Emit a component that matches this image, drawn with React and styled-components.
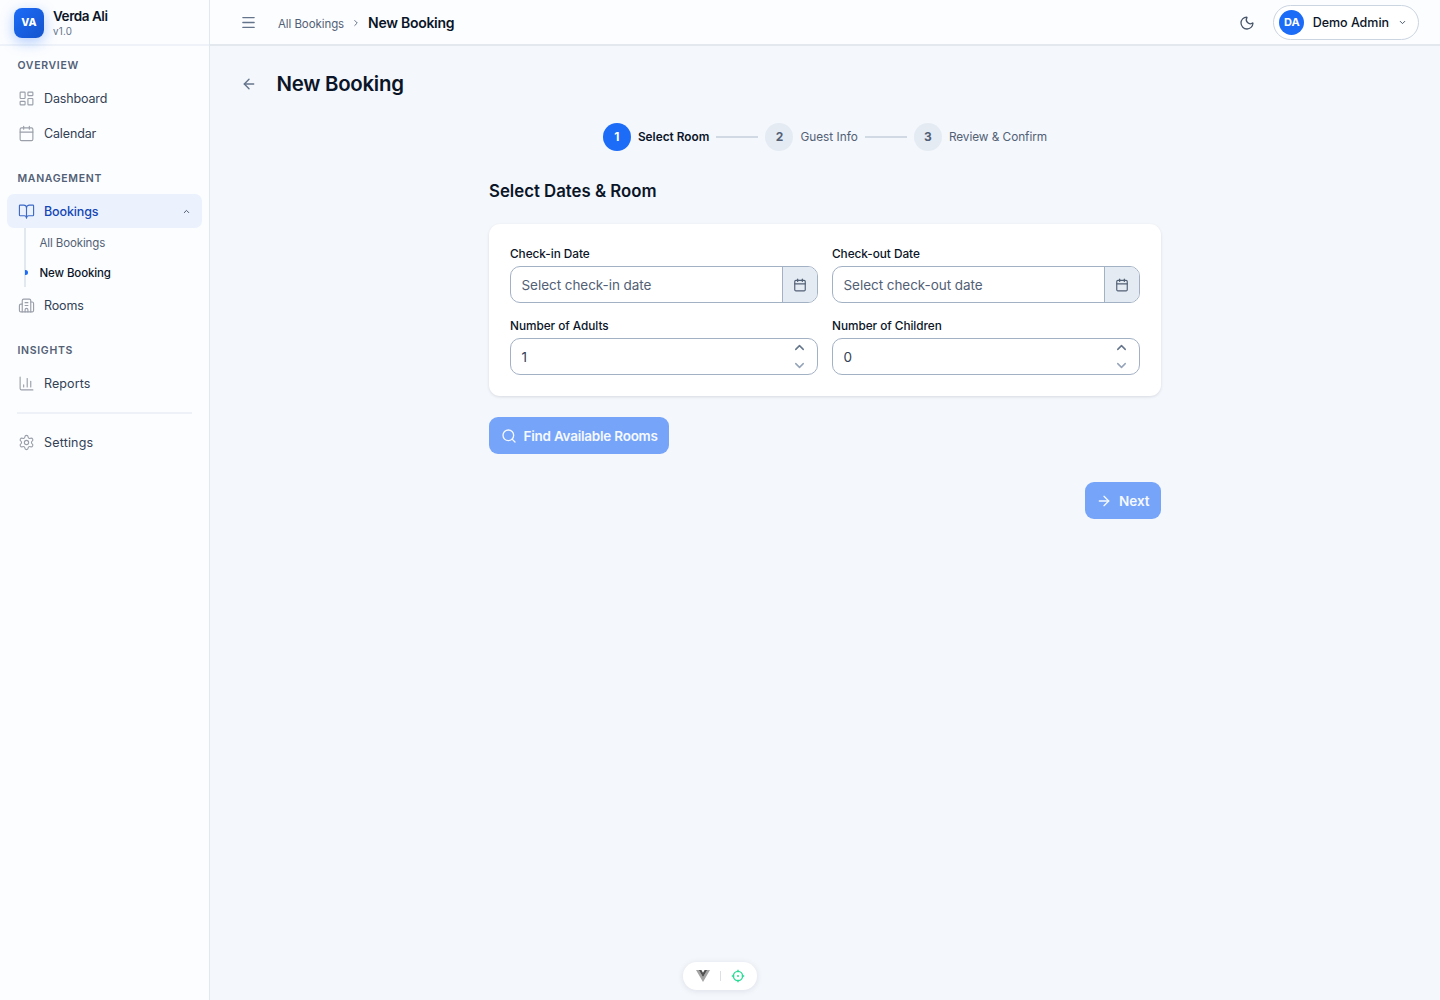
import styled, { createGlobalStyle } from "styled-components"
import {
  ArrowLeft,
  ArrowRight,
  BookOpen,
  Building2,
  Calendar,
  ChartColumn,
  ChevronDown,
  ChevronRight,
  ChevronUp,
  LayoutDashboard,
  Menu,
  Moon,
  Search,
  Settings,
} from "lucide-react"

const App = () => {
  return (
    <Page>
      <GlobalStyle />
      <Sidebar>
        <Brand>
          <Logo>VA</Logo>
          <BrandText>
            <BrandName>Verda Ali</BrandName>
            <Version>v1.0</Version>
          </BrandText>
        </Brand>
        <Nav>
          <GroupLabel>OVERVIEW</GroupLabel>
          <NavItem>
            <LayoutDashboard />
            Dashboard
          </NavItem>
          <NavItem>
            <Calendar />
            Calendar
          </NavItem>
          <GroupLabel>MANAGEMENT</GroupLabel>
          <NavItem $active>
            <BookOpen />
            <NavText>Bookings</NavText>
            <ChevronUp className="chevron" />
          </NavItem>
          <SubNav>
            <SubItem>All Bookings</SubItem>
            <SubItem $active>New Booking</SubItem>
          </SubNav>
          <NavItem>
            <Building2 />
            Rooms
          </NavItem>
          <GroupLabel>INSIGHTS</GroupLabel>
          <NavItem $spacing="0.1px">
            <ChartColumn />
            Reports
          </NavItem>
          <Divider />
          <NavItem $spacing="0.18px">
            <Settings />
            Settings
          </NavItem>
        </Nav>
      </Sidebar>
      <Content>
        <Header>
          <Menu size={17} strokeWidth={1.8} color="#64748b" />
          <Crumbs>
            <Crumb>All Bookings</Crumb>
            <ChevronRight size={10} strokeWidth={2.4} color="#64748b" />
            <CurrentCrumb>New Booking</CurrentCrumb>
          </Crumbs>
          <Moon size={16} strokeWidth={1.9} color="#475569" />
          <UserButton>
            <Avatar>DA</Avatar>
            <UserName>Demo Admin</UserName>
            <ChevronDown size={9} strokeWidth={2.6} color="#475569" />
          </UserButton>
        </Header>
        <TitleRow>
          <ArrowLeft size={16} strokeWidth={2.1} color="#64748b" />
          <Title>New Booking</Title>
        </TitleRow>
        <Steps>
          <StepNumber $active>1</StepNumber>
          <StepLabel $active>Select Room</StepLabel>
          <StepLine />
          <StepNumber>2</StepNumber>
          <StepLabel>Guest Info</StepLabel>
          <StepLine />
          <StepNumber>3</StepNumber>
          <StepLabel $spacing="-0.05px">Review &amp; Confirm</StepLabel>
        </Steps>
        <Form>
          <FormTitle>Select Dates &amp; Room</FormTitle>
          <Card>
            <DateField label="Check-in Date" placeholder="Select check-in date" />
            <DateField label="Check-out Date" placeholder="Select check-out date" />
            <NumberField label="Number of Adults" value="1" />
            <NumberField label="Number of Children" value="0" />
          </Card>
          <Button>
            <Search size={16} strokeWidth={2} />
            Find Available Rooms
          </Button>
          <Footer>
            <Button $spacing="-0.05px">
              <ArrowRight size={16} strokeWidth={2} />
              Next
            </Button>
          </Footer>
        </Form>
      </Content>
      <DevTools />
    </Page>
  )
}

const DateField = ({ label, placeholder }) => (
  <Field>
    <Label>{label}</Label>
    <InputBox>
      <Value $muted>{placeholder}</Value>
      <DateButton>
        <Calendar size={14} strokeWidth={2} />
      </DateButton>
    </InputBox>
  </Field>
)

const NumberField = ({ label, value }) => (
  <Field>
    <Label>{label}</Label>
    <InputBox>
      <Value>{value}</Value>
      <Spinner>
        <ChevronUp size={15} strokeWidth={2.3} color="#64748b" />
        <ChevronDown size={15} strokeWidth={2.3} color="#94a3b8" />
      </Spinner>
    </InputBox>
  </Field>
)

const DevTools = () => (
  <DevBar>
    <svg width="14" height="12" viewBox="0 0 14 12">
      <path d="M0 0h2.8L7 7.3 11.2 0H14L7 12Z" fill="#a3a3a3" />
      <path d="M2.8 0h2.6L7 2.8 8.6 0h2.6L7 7.3Z" fill="#525252" />
    </svg>
    <DevLine />
    <svg width="14" height="14" viewBox="0 0 14 14" fill="none" stroke="#2bdc96" strokeWidth="1.4">
      <circle cx="7" cy="7" r="4.6" />
      <path d="M7 .8v2.4M7 10.8v2.4M.8 7h2.4M10.8 7h2.4" />
      <circle cx="7" cy="7" r="1" fill="#2bdc96" stroke="none" />
    </svg>
  </DevBar>
)

export default App

const GlobalStyle = createGlobalStyle`
  * {
    box-sizing: border-box;
  }
  body {
    margin: 0;
    font-family: Inter, "Liberation Sans", sans-serif;
    font-size: 13.5px;
    color: #0b1528;
    background: #f4f7fc;
  }
  svg {
    display: block;
    flex-shrink: 0;
  }
`

const Page = styled.div`
  display: flex;
  height: 1000px;
  overflow: hidden;
`

const Sidebar = styled.aside`
  width: 210px;
  flex-shrink: 0;
  background: #fcfdff;
  border-right: 1px solid #e2e8f0;
`

const Brand = styled.div`
  display: flex;
  align-items: center;
  gap: 9px;
  height: 46px;
  padding: 1px 14px 0;
  border-bottom: 2px solid #eff3f9;
`

const Logo = styled.div`
  display: flex;
  align-items: center;
  justify-content: center;
  width: 30px;
  height: 30px;
  border-radius: 8px;
  color: #fff;
  font-size: 10.5px;
  font-weight: 800;
  background: linear-gradient(135deg, #1c6cf8, #1453cc);
  box-shadow: 0 4px 14px rgba(28, 108, 248, 0.34);
`

const BrandText = styled.div`
  display: flex;
  flex-direction: column;
`

const BrandName = styled.div`
  font-size: 13.5px;
  line-height: 16px;
  font-weight: 600;
  letter-spacing: -0.45px;
`

const Version = styled.div`
  padding-top: 2px;
  font-size: 9.8px;
  line-height: 12px;
  letter-spacing: 0.25px;
  color: #64748b;
`

const Nav = styled.nav`
  margin-top: -8px;
  padding: 0 7px;
`

const GroupLabel = styled.div`
  height: 43px;
  padding: 20.5px 10.5px 0;
  font-size: 10.5px;
  line-height: 14px;
  font-weight: 600;
  letter-spacing: 0.68px;
  color: #526075;
`

const NavItem = styled.div`
  display: flex;
  align-items: center;
  gap: 9px;
  height: 34px;
  margin-bottom: 1px;
  padding: 0 11px;
  border-radius: 7px;
  font-size: 12.5px;
  font-weight: ${(p) => (p.$active ? 500 : 400)};
  letter-spacing: ${(p) => p.$spacing || "-0.14px"};
  color: ${(p) => (p.$active ? "#1546b5" : "#334155")};
  background: ${(p) => (p.$active ? "#ebf2fe" : "transparent")};

  svg {
    width: 17px;
    height: 17px;
    stroke-width: 1.6;
    color: ${(p) => (p.$active ? "#3d69c6" : "#9a9fa9")};
  }
  .chevron {
    width: 9px;
    height: 9px;
    stroke-width: 2.6;
    color: #475569;
  }
`

const NavText = styled.span`
  flex: 1;
`

const SubNav = styled.div`
  height: 59px;
  margin: -1px 0 1px 17px;
  border-left: 2px solid #e2e8f0;
`

const SubItem = styled.div`
  position: relative;
  height: 30px;
  padding-left: 13.5px;
  line-height: 30px;
  font-size: 11.5px;
  font-weight: ${(p) => (p.$active ? 500 : 400)};
  letter-spacing: -0.12px;
  color: ${(p) => (p.$active ? "#0b1528" : "#526075")};

  &::before {
    content: "";
    display: ${(p) => (p.$active ? "block" : "none")};
    position: absolute;
    left: -1px;
    top: 12px;
    width: 3px;
    height: 5px;
    border-radius: 0 3px 3px 0;
    background: #1c6cf8;
  }
`

const Divider = styled.div`
  height: 2px;
  margin: 11.5px 10px 12px;
  background: #eef1f7;
`

const Content = styled.main`
  flex: 1;
`

const Header = styled.header`
  display: flex;
  align-items: center;
  height: 46px;
  padding: 1px 21px 0 30px;
  background: #fcfdff;
  border-bottom: 2px solid #e3e8ef;
`

const Crumbs = styled.div`
  display: flex;
  align-items: center;
  flex: 1;
  margin-left: 21px;
`

const Crumb = styled.span`
  margin-right: 7px;
  padding-top: 2px;
  font-size: 11.5px;
  letter-spacing: -0.08px;
  color: #526075;
`

const CurrentCrumb = styled.span`
  margin-left: 7px;
  font-size: 14px;
  font-weight: 600;
  letter-spacing: -0.28px;
`

const UserButton = styled.div`
  display: flex;
  align-items: center;
  height: 35px;
  margin-left: 18px;
  padding: 0 11px 0 5px;
  border: 1px solid #cbd5e1;
  border-radius: 18px;
  background: #fff;
`

const Avatar = styled.div`
  width: 25px;
  height: 25px;
  border-radius: 50%;
  line-height: 25px;
  text-align: center;
  font-size: 11px;
  font-weight: 700;
  color: #fff;
  background: #1c6cf8;
`

const UserName = styled.span`
  margin: 0 9px 0 8.4px;
  font-size: 12.5px;
  font-weight: 500;
  letter-spacing: -0.03px;
`

const TitleRow = styled.div`
  display: flex;
  align-items: center;
  height: 36px;
  margin-top: 20px;
  padding-left: 30.5px;
`

const Title = styled.h1`
  margin: -2px 0 0 20px;
  font-size: 20.4px;
  font-weight: 600;
  letter-spacing: -0.25px;
`

const Steps = styled.div`
  display: flex;
  align-items: center;
  justify-content: center;
  gap: 7px;
  margin-top: 21px;
`

const StepNumber = styled.div`
  width: 28px;
  height: 28px;
  border-radius: 50%;
  line-height: 28px;
  text-align: center;
  font-size: 12px;
  font-weight: 700;
  color: ${(p) => (p.$active ? "#fff" : "#526075")};
  background: ${(p) => (p.$active ? "#1c6cf8" : "#e4ebf3")};
`

const StepLabel = styled.span`
  font-size: 11.8px;
  font-weight: ${(p) => (p.$active ? 600 : 400)};
  letter-spacing: ${(p) => p.$spacing || "0.02px"};
  color: ${(p) => (p.$active ? "#0b1528" : "#526075")};
`

const StepLine = styled.div`
  width: 42px;
  height: 2px;
  background: #d0d9e4;
`

const Form = styled.section`
  width: 672px;
  margin: 28px auto 0;
`

const FormTitle = styled.h2`
  margin: 0 0 21px;
  font-size: 16.8px;
  line-height: 24px;
  font-weight: 600;
`

const Card = styled.div`
  display: grid;
  grid-template-columns: 1fr 1fr;
  gap: 14px;
  height: 172px;
  margin-bottom: 21px;
  padding: 21px;
  border-radius: 11px;
  background: #fff;
  box-shadow: 0 1px 3px rgba(15, 23, 42, 0.12);
`

const Field = styled.div`
  display: flex;
  flex-direction: column;
  gap: 3px;
`

const Label = styled.label`
  padding-top: 1px;
  font-size: 11.8px;
  line-height: 17px;
  font-weight: 500;
  letter-spacing: -0.04px;
`

const InputBox = styled.div`
  display: flex;
  height: 37px;
  overflow: hidden;
  border: 1px solid #a3b1c4;
  border-radius: 10px;
  background: #fff;
`

const Value = styled.div`
  flex: 1;
  padding-left: 10.5px;
  line-height: 36px;
  font-size: 13.5px;
  letter-spacing: -0.05px;
  color: ${(p) => (p.$muted ? "#526075" : "#334155")};
`

const DateButton = styled.div`
  display: flex;
  align-items: center;
  justify-content: center;
  width: 35px;
  border-left: 1px solid #a3b1c4;
  color: #526075;
  background: #e4ebf3;
`

const Spinner = styled.div`
  display: flex;
  flex-direction: column;
  align-items: center;
  justify-content: space-between;
  width: 35px;
  padding: 1px 0;
`

const Button = styled.button`
  display: inline-flex;
  align-items: center;
  gap: 7px;
  height: 37px;
  padding: 0 11.5px;
  border: 0;
  border-radius: 9px;
  font-family: inherit;
  font-size: 13.5px;
  font-weight: 600;
  letter-spacing: ${(p) => p.$spacing || "-0.23px"};
  color: #f5f9ff;
  background: #75a4f9;
`

const Footer = styled.div`
  display: flex;
  justify-content: flex-end;
  margin-top: 28px;
`

const DevBar = styled.div`
  position: fixed;
  left: 683px;
  bottom: 10px;
  display: flex;
  align-items: center;
  justify-content: space-between;
  width: 74px;
  height: 28px;
  padding: 0 12px 0 13px;
  border-radius: 14px;
  background: #fff;
  box-shadow: 0 1px 6px rgba(15, 23, 42, 0.1);
`

const DevLine = styled.div`
  width: 1px;
  height: 10px;
  background: #dddfe3;
`
